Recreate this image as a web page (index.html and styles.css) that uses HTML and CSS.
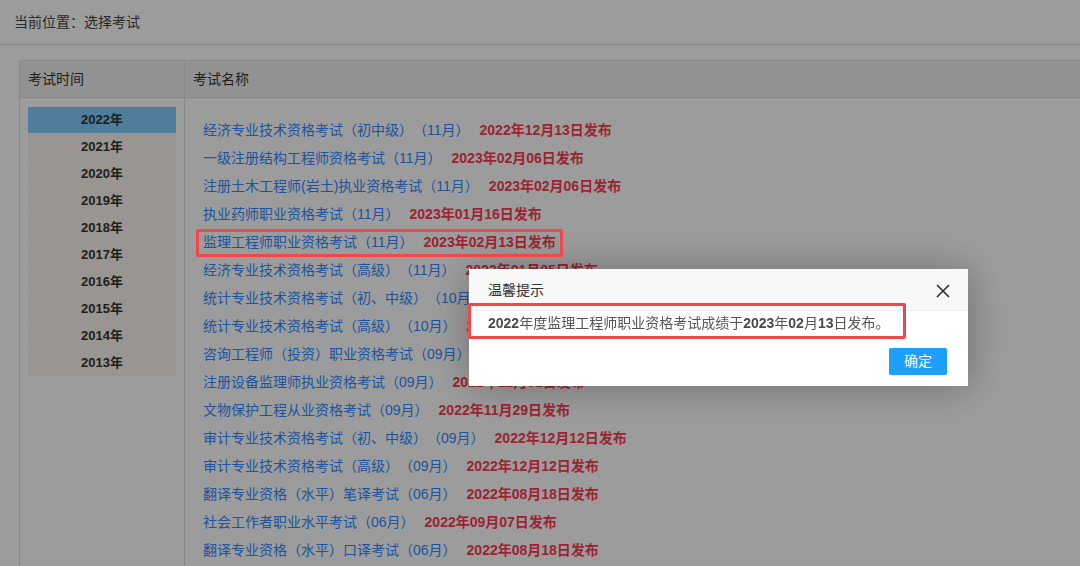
FILE: index.html
```html
<!DOCTYPE html>
<html lang="zh-CN">
<head>
  <meta charset="UTF-8">
  <meta name="viewport" content="width=device-width, initial-scale=1.0">
  <title>选择考试</title>
  <link rel="stylesheet" href="styles.css">
</head>
<body>

  <!-- 当前位置 -->
  <div class="crumb">当前位置：选择考试</div>

  <!-- 考试列表 -->
  <div class="exam-table">
    <div class="col-year">
      <div class="col-head">考试时间</div>
      <ul class="years">
        <li class="active">2022年</li>
        <li>2021年</li>
        <li>2020年</li>
        <li>2019年</li>
        <li>2018年</li>
        <li>2017年</li>
        <li>2016年</li>
        <li>2015年</li>
        <li>2014年</li>
        <li>2013年</li>
      </ul>
    </div>
    <div class="col-name">
      <div class="col-head">考试名称</div>
      <ul class="exams">
        <li><a href="#">经济专业技术资格考试（初中级）（11月）</a><span class="date">2022年12月13日发布</span></li>
        <li><a href="#">一级注册结构工程师资格考试（11月）</a><span class="date">2023年02月06日发布</span></li>
        <li><a href="#">注册土木工程师(岩土)执业资格考试（11月）</a><span class="date">2023年02月06日发布</span></li>
        <li><a href="#">执业药师职业资格考试（11月）</a><span class="date">2023年01月16日发布</span></li>
        <li class="marked"><a href="#">监理工程师职业资格考试（11月）</a><span class="date">2023年02月13日发布</span></li>
        <li><a href="#">经济专业技术资格考试（高级）（11月）</a><span class="date">2023年01月05日发布</span></li>
        <li><a href="#">统计专业技术资格考试（初、中级）（10月）</a><span class="date">2022年12月20日发布</span></li>
        <li><a href="#">统计专业技术资格考试（高级）（10月）</a><span class="date">2022年12月20日发布</span></li>
        <li><a href="#">咨询工程师（投资）职业资格考试（09月）</a><span class="date">2022年12月05日发布</span></li>
        <li><a href="#">注册设备监理师执业资格考试（09月）</a><span class="date">2022年12月01日发布</span></li>
        <li><a href="#">文物保护工程从业资格考试（09月）</a><span class="date">2022年11月29日发布</span></li>
        <li><a href="#">审计专业技术资格考试（初、中级）（09月）</a><span class="date">2022年12月12日发布</span></li>
        <li><a href="#">审计专业技术资格考试（高级）（09月）</a><span class="date">2022年12月12日发布</span></li>
        <li><a href="#">翻译专业资格（水平）笔译考试（06月）</a><span class="date">2022年08月18日发布</span></li>
        <li><a href="#">社会工作者职业水平考试（06月）</a><span class="date">2022年09月07日发布</span></li>
        <li><a href="#">翻译专业资格（水平）口译考试（06月）</a><span class="date">2022年08月18日发布</span></li>
      </ul>
    </div>
  </div>

  <!-- 遮罩 + 弹窗 -->
  <div class="shade"></div>
  <div class="layer">
    <div class="layer-title">
      温馨提示
      <span class="layer-close">
        <svg width="14" height="14" viewBox="0 0 14 14"><path d="M1 1L13 13M13 1L1 13" stroke="#333" stroke-width="1.7" fill="none"/></svg>
      </span>
    </div>
    <div class="layer-content">
      <span class="notice"><b>2022</b>年度监理工程师职业资格考试成绩于<b>2023</b>年<b>02</b>月<b>13</b>日发布。</span>
    </div>
    <div class="layer-btns">
      <a class="btn" href="#">确定</a>
    </div>
  </div>

</body>
</html>
```

FILE: styles.css
```css
/* Reset */
* { box-sizing: border-box; margin: 0; padding: 0; }
body {
  width: 1080px;
  height: 566px;
  overflow: hidden;
  font-family: "Liberation Sans", "Noto Sans CJK SC", sans-serif;
  font-size: 14px;
  color: #333;
  background: #fff;
  text-spacing-trim: space-all;
}
ul { list-style: none; }
a { text-decoration: none; }

/* 当前位置 */
.crumb {
  height: 45px;
  line-height: 44px;
  padding-left: 14px;
  color: #444;
  border-bottom: 1px solid #dadada;
}

/* 表格 */
.exam-table {
  display: flex;
  width: 1100px;
  height: 520px;
  margin: 15px 0 0 19px;
  border: 1px solid #dedede;
  border-bottom: none;
}
.col-head {
  height: 37px;
  line-height: 36px;
  padding-left: 8px;
  background: #efefef;
  border-bottom: 1px solid #dedede;
  color: #333;
}
.col-year {
  flex: 0 0 165px;
  border-right: 1px solid #dedede;
}
.col-name { flex: 1; }

.years {
  padding: 9px 8px 0 8px;
}
.years li {
  height: 27px;
  line-height: 26px;
  text-align: center;
  font-size: 13px;
  font-weight: bold;
  color: #333;
  background: #fcf4ec;
  border-bottom: 1px solid #fff8f3;
}
.years li.active {
  background: #82ccff;
}

.exams {
  padding: 18px 0 0 18px;
}
.exams li {
  width: fit-content;
  line-height: 28px;
  white-space: nowrap;
}
.exams a { color: #3388ff; }
.date {
  margin-left: 10px;
  font-weight: bold;
  color: #ff3a50;
}
.marked { position: relative; }
.marked::after {
  content: "";
  position: absolute;
  top: 1px;
  bottom: -1px;
  left: -7px;
  right: -7px;
  border: 3px solid #f0474b;
  border-radius: 2px;
  z-index: 30;
}

/* 遮罩 */
.shade {
  position: fixed;
  inset: 0;
  background: rgba(0, 0, 0, 0.39);
  z-index: 10;
}

/* 弹窗 */
.layer {
  position: fixed;
  left: 469px;
  top: 269px;
  width: 499px;
  height: 117px;
  background: #fff;
  box-shadow: 1px 1px 40px rgba(0, 0, 0, 0.3);
  z-index: 20;
}
.layer-title {
  position: relative;
  height: 42px;
  line-height: 42px;
  padding-left: 19px;
  background: #f8f8f8;
  border-bottom: 1px solid #eee;
  color: #333;
}
.layer-close {
  position: absolute;
  right: 18px;
  top: 15px;
  width: 14px;
  height: 14px;
  line-height: 0;
}
.layer-content {
  padding: 1px 20px 0 19px;
  line-height: 22px;
  color: #555;
}
.notice { position: relative; }
.notice b { color: #4a4a4a; }
.notice::after {
  content: "";
  position: absolute;
  top: -12px;
  bottom: -8px;
  left: -20px;
  right: -17px;
  border: 3px solid #f0474b;
  border-radius: 2px;
}
.layer-btns {
  display: flex;
  justify-content: flex-end;
  padding: 14px 21px 0 0;
}
.btn {
  height: 27px;
  line-height: 27px;
  padding: 0 15px;
  background: #1e9fff;
  color: #fff;
  border-radius: 2px;
}
```
